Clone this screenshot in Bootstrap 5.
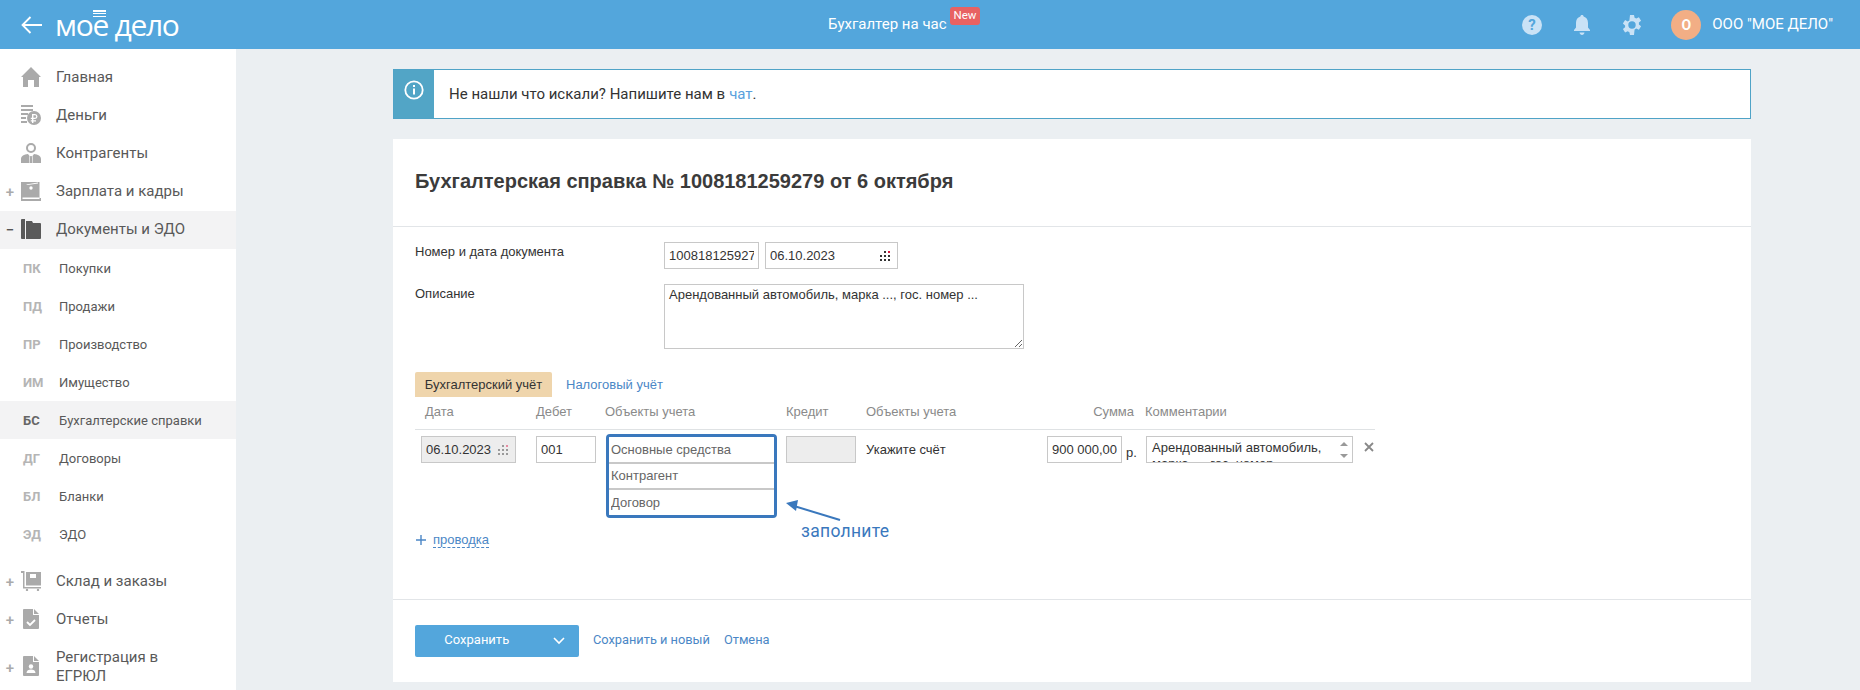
<!DOCTYPE html>
<html lang="ru">
<head>
<meta charset="utf-8">
<title>Бухгалтерская справка</title>
<link href="https://cdn.jsdelivr.net/npm/bootstrap@5.3.0/dist/css/bootstrap.min.css" rel="stylesheet">
<style>
html,body{height:690px;overflow:hidden}
body{background:#ebeff2;font-family:"Liberation Sans",Arial,sans-serif;color:#333;font-size:13px}
.topbar{height:49px;background:#53a6dc;color:#fff;padding:0}
.topbar-in{width:100%;height:49px;display:flex;align-items:center;position:relative;font-family:Roboto,sans-serif}
.back-arrow{margin-left:21px;width:21px;height:18px}
.logo-text{margin-left:13px;font-family:"Open Sans",sans-serif;font-weight:500;font-size:30px;line-height:49px;letter-spacing:-1.3px;color:#fff}
.logo-e{position:relative;display:inline-block}
.logo-e::before{content:"";position:absolute;left:1px;right:2px;top:10px;height:7px;background:repeating-linear-gradient(#fff 0 1.5px,transparent 1.5px 3px)}
.center-title{position:absolute;left:828px;top:0;line-height:49px;font-size:15px;color:#fff}
.new-tag{position:absolute;left:950px;top:7px;width:30px;height:18px;background:#e86262;border-radius:3px;color:#fff;font-size:11.5px;line-height:17px;text-align:center}
.top-right{margin-left:auto;display:flex;align-items:center;padding-right:27px}
.top-ico{width:22px;height:22px;margin-right:28px;display:block}
.ava{width:30px;height:30px;border-radius:50%;background:#f2ae85;color:#fff;font-weight:700;font-size:14px;line-height:30px;text-align:center;margin-right:11px}
.org-name{font-size:15px;color:#fff}
.shell{display:flex;height:641px}
.side{width:236px;background:#fff;flex:none;padding-top:10px;font-family:Roboto,sans-serif;color:#595959;overflow:hidden}
.side-row{height:38px;display:flex;align-items:center;font-size:15px;position:relative;padding-left:56px;padding-bottom:2px}
.side-row.on{background:#f3f3f4}
.side-row .pm{position:absolute;left:5px;top:50%;transform:translateY(-50%);width:10px;text-align:center;color:#aaa;font-size:15px;font-weight:500;line-height:1}
.side-row.on .pm{color:#555}
.side-ico{position:absolute;left:21px;top:8px;width:20px;height:20px}
.sub-row{height:38px;display:flex;align-items:center;font-size:13px;padding-left:23px;padding-top:2px}
.sub-row b{width:36px;color:#b5b5b5;font-weight:700;font-size:13px}
.sub-row.on{background:#f3f3f4}
.sub-row.on b{color:#666}
.gap-sub{height:10px}
.two-line{line-height:19px;height:40px;margin-top:9px}
.main{flex:1;padding:20px 109px 0 157px;min-width:0}
.banner{height:50px;background:#fff;border:1px solid #4fa3c7;display:flex;align-items:stretch;font-family:Roboto,sans-serif;font-size:15px;color:#333}
.banner-ico{width:40px;background:#52a5c6;display:flex;align-items:flex-start;justify-content:center;padding-top:10px;flex:none}
.banner-txt{padding-left:15px;display:flex;align-items:center;padding-top:1px}
.banner-txt a,.blue-link{color:#4b87c6;text-decoration:none}
.banner-txt a{color:#5aa0dc;margin-left:4px}
.doc{margin-top:20px;background:#fff;height:543px;display:flex;flex-direction:column}
.doc-head{height:88px;border-bottom:1px solid #e2e5e8;padding:0 22px 3px;display:flex;align-items:center}
.doc-head h1{font-size:20px;font-weight:700;color:#3b3b3b;margin:0}
.doc-body{flex:1;padding:15px 22px 0;position:relative}
.frow{display:flex}
.frow-gap{margin-top:15px}
.flabel{width:249px;font-size:13px;color:#333}
.fld.form-control{border-radius:0;border:1px solid #c8c8c8;height:27px;min-height:0;padding:2px 4px;font-family:"Liberation Sans",sans-serif;font-size:13px;color:#333;box-shadow:none;background-color:#fff}
.w-num{width:95px}
.date-wrap{position:relative;width:133px;margin-left:6px}
.date-ico{position:absolute;right:8px;top:9px;width:10px;height:10px}
.descr.form-control{width:360px;height:65px;min-height:0;border-radius:0;border:1px solid #c8c8c8;padding:2px 4px;font-size:13px;line-height:15px;font-family:"Liberation Sans",sans-serif;color:#333;box-shadow:none}
.tabs-line{margin-top:23px;display:flex;align-items:center;height:25px;font-size:13px}
.tab-on{width:137px;height:25px;background:#efd5ac;border-radius:2px 2px 0 0;line-height:25px;text-align:center;color:#333}
.tab-off{margin-left:14px;color:#4b87c6;text-decoration:none}
.ent-head{height:33px;border-bottom:1px solid #dfe2e4;width:960px;display:grid;grid-template-columns:121px 69px 181px 80px 200px 68px 1fr;align-items:center;color:#8a8a8a;font-size:13px;padding-bottom:2px}
.ent-head span{display:block}
.ent-head .first-h{padding-left:10px}
.ent-head .last-h{padding-left:11px}
.ent-row{display:grid;width:960px;grid-template-columns:6px 95px 20px 60px 10px 171px 9px 70px 10px 181px 75px 24px 207px 22px;padding-top:6px;align-items:start}
.ent-row .form-control.gray{background:#ededed}
.obj-box{border:3px solid #3a78bd;border-radius:4px;margin-top:-2px;height:84px;display:flex;flex-direction:column;overflow:hidden}
.obj-box input{flex:1;border:0;border-bottom:2px solid #c8c8c8;padding:0 2px;font-size:13px;font-family:"Liberation Sans",sans-serif;background:#fff;min-width:0;outline:0;width:100%}
.obj-box input:last-child{border-bottom:0}
.obj-box input::placeholder{color:#666;opacity:1}
.acct-note{font-size:13px;padding-top:4px;color:#333}
.rub{font-size:13px;padding:7px 0 0 4px;color:#333}
.cmt-wrap{position:relative}
.cmt.form-control{height:27px;min-height:0;overflow:hidden;resize:none;border-radius:0;border:1px solid #c8c8c8;padding:3px 22px 0 5px;font-size:13px;line-height:16px;color:#333;font-family:"Liberation Sans",sans-serif;box-shadow:none}
.spin{position:absolute;right:5px;top:6px;width:8px;height:16px}
.del-x{width:10px;height:10px;margin:6px 0 0 11px}
.add-line{position:absolute;left:23px;top:305px;display:flex;align-items:center;gap:7px;color:#4b87c6;font-size:13px}
.dash-link{color:#4b87c6;text-decoration:none;border-bottom:1px dashed #4b87c6;line-height:15px}
.hint-arrow{position:absolute;left:391px;top:273px;width:58px;height:22px}
.hint-text{position:absolute;left:408px;top:291px;font-family:Roboto,sans-serif;font-size:17.5px;color:#3a78bd;letter-spacing:.3px}
.doc-foot{height:83px;border-top:1px solid #e2e5e8;padding:25px 22px 0;display:flex;align-items:flex-start;font-family:Roboto,sans-serif;font-size:12.8px}
.save-grp.btn-group{width:164px;height:32px}
.save-grp .btn{background:#53a6dc;border:0;color:#fff;font-size:13px;font-family:Roboto,sans-serif;padding:0 0 2px;border-radius:2px}
.save-grp .btn:first-child{width:124px;border-right:1px solid #4a9ad0}
.save-grp .btn:last-child{width:40px}
.foot-links{display:flex;gap:14px;margin-left:14px;line-height:30px}
</style>
</head>
<body>
<nav class="navbar topbar">
  <div class="topbar-in">
    <svg class="back-arrow" viewBox="0 0 21 18" fill="none" stroke="#fff" stroke-width="1.8"><path d="M21 9H1.500M9.500 1 1.500 9l8 8"/></svg>
    <span class="logo-text">мо<span class="logo-e">е</span> дело</span>
    <span class="center-title">Бухгалтер на час</span>
    <span class="new-tag">New</span>
    <div class="top-right">
      <svg class="top-ico" viewBox="0 0 22 22"><circle cx="11" cy="11" r="10" fill="#c9e2f6"/><text x="11" y="16" text-anchor="middle" font-family="Roboto,sans-serif" font-weight="700" font-size="15" fill="#53a6dc">?</text></svg>
      <svg class="top-ico" viewBox="0 0 22 22" fill="#c9e2f6"><path d="M11 1c1 0 1.600.7 1.600 1.500C15.500 3.300 17 5.700 17 9v4.500l2 2.500v1H3v-1l2-2.500V9c0-3.300 1.500-5.700 4.400-6.500C9.400 1.700 10 1 11 1z"/><path d="M8.500 18.500h5c-.3 1.500-1.200 2.500-2.500 2.500s-2.200-1-2.500-2.500z"/></svg>
      <svg class="top-ico" viewBox="0 0 22 22" fill="#c9e2f6"><path fill-rule="evenodd" d="M9 1h4l.6 2.800 1.700.8 2.600-1.300 2.200 3.400-2.200 1.900v1.900l2.200 1.800-2.200 3.500-2.600-1.300-1.700.9L13 21H9l-.6-2.800-1.700-.9-2.600 1.300-2.200-3.500 2.200-1.800V11.400L1.900 9.500 4.100 6.100l2.600 1.300 1.700-.8zM11 7.300a3.700 3.700 0 1 0 0 7.400 3.700 3.700 0 0 0 0-7.400z"/></svg>
      <span class="ava">О</span>
      <span class="org-name">ООО "МОЕ ДЕЛО"</span>
    </div>
  </div>
</nav>
<div class="shell">
  <aside class="side">
    <div class="side-row"><svg class="side-ico" viewBox="0 0 20 20" fill="#aaa"><path d="M10 0 20 10h-2v10h-5v-7H7v7H2V10H0z"/></svg>Главная</div>
    <div class="side-row"><svg class="side-ico" viewBox="0 0 20 20" fill="#aaa"><path d="M0 0h12v2H0zM0 4h12v2H0zM0 8h7v2H0zM0 12h5v2H0zM0 16h6v2H0z"/><circle cx="13" cy="13" r="7"/><path fill="#fff" d="M11 9h3a2.500 2.500 0 0 1 0 5h-1.600v1.200H15v1.300h-2.600V18H11v-1.500H9.800v-1.300H11V14H9.800v-1.300H11zm1.400 1.300v2.400H14a1.200 1.200 0 0 0 0-2.400z"/></svg>Деньги</div>
    <div class="side-row"><svg class="side-ico" viewBox="0 0 20 20" fill="#aaa"><path fill-rule="evenodd" d="M10 0a5 5 0 1 1 0 10 5 5 0 0 1 0-10zm0 2a3 3 0 1 0 0 6 3 3 0 0 0 0-6z"/><path d="M0 20v-4c0-3 3-4.500 7-5l1.500 2-.5 7zM20 20v-4c0-3-3-4.500-7-5l-1.500 2 .5 7zM9.200 13h1.600l.7 7h-3z"/></svg>Контрагенты</div>
    <div class="side-row"><span class="pm">+</span><svg class="side-ico" viewBox="0 0 20 20" fill="#aaa"><path d="M0 1h20v19H0z"/><path fill="#fff" d="M1.500 16.500h17V18h-17zM5 3.500 17 1.500v1L6.500 4z"/><path fill="#fff" d="M18.500 1h1.500v16h-1.500z"/><circle cx="10" cy="7" r="1.700" fill="#fff"/></svg>Зарплата и кадры</div>
    <div class="side-row on"><span class="pm">−</span><svg class="side-ico" viewBox="0 0 20 20" fill="#5a5a5a"><path d="M0 1c0-.5.500-1 1-1h3v20H1c-.5 0-1-.5-1-1zM5 2h6l1 2h7c.5 0 1 .5 1 1v14c0 .5-.5 1-1 1H5z"/></svg>Документы и ЭДО</div>
    <div class="sub-row"><b>ПК</b>Покупки</div>
    <div class="sub-row"><b>ПД</b>Продажи</div>
    <div class="sub-row"><b>ПР</b>Производство</div>
    <div class="sub-row"><b>ИМ</b>Имущество</div>
    <div class="sub-row on"><b>БС</b>Бухгалтерские справки</div>
    <div class="sub-row"><b>ДГ</b>Договоры</div>
    <div class="sub-row"><b>БЛ</b>Бланки</div>
    <div class="sub-row"><b>ЭД</b>ЭДО</div>
    <div class="gap-sub"></div>
    <div class="side-row"><span class="pm">+</span><svg class="side-ico" viewBox="0 0 20 20" fill="#aaa"><path d="M0 0h3.500v16H20v1.500H2V2H0z"/><path d="M5 1h15v13.500H5z"/><path fill="#fff" d="M9 3h6v4H9z"/><circle cx="6" cy="19" r="1.200"/><circle cx="17" cy="19" r="1.200"/></svg>Склад и заказы</div>
    <div class="side-row"><span class="pm">+</span><svg class="side-ico" viewBox="0 0 20 20" fill="#aaa"><path d="M2 1c0-.5.500-1 1-1h9v6h6v13c0 .5-.5 1-1 1H3c-.5 0-1-.5-1-1zM13 0l5 5h-5z"/><path d="m6 13 3 3 5-5" fill="none" stroke="#fff" stroke-width="1.800"/></svg>Отчеты</div>
    <div class="side-row two-line"><span class="pm">+</span><svg class="side-ico" viewBox="0 0 20 20" fill="#aaa"><path d="M2 1c0-.5.500-1 1-1h9v6h6v13c0 .5-.5 1-1 1H3c-.5 0-1-.5-1-1zM13 0l5 5h-5z"/><circle cx="10" cy="10.500" r="2.200" fill="#fff"/><path d="M5.500 17c0-2.500 2-3.500 4.500-3.500s4.500 1 4.500 3.500z" fill="#fff"/></svg><span>Регистрация в<br>ЕГРЮЛ</span></div>
  </aside>
  <main class="main">
    <div class="banner">
      <div class="banner-ico"><svg width="20" height="20" viewBox="0 0 20 20" fill="none" stroke="#fff" stroke-width="1.800"><circle cx="10" cy="10" r="8.700"/><path d="M10 8.500v6" stroke-width="2"/><path d="M10 5v2" stroke-width="2"/></svg></div>
      <div class="banner-txt">Не нашли что искали? Напишите нам в <a href="#">чат</a>.</div>
    </div>
    <section class="doc">
      <div class="doc-head"><h1>Бухгалтерская справка № 1008181259279 от 6 октября</h1></div>
      <div class="doc-body">
        <div class="frow">
          <div class="flabel">Номер и дата документа</div>
          <input class="form-control fld w-num" value="1008181259279">
          <div class="date-wrap"><input class="form-control fld" value="06.10.2023">
            <svg class="date-ico" viewBox="0 0 10 10" fill="#333"><path d="M0 4h2v2H0zM0 8h2v2H0zM4 0h2v2H4zM4 4h2v2H4zM4 8h2v2H4zM8 4h2v2H8zM8 8h2v2H8z"/><path d="M8 0h2v2H8z" fill="#d8133a"/></svg>
          </div>
        </div>
        <div class="frow frow-gap">
          <div class="flabel">Описание</div>
          <textarea class="form-control descr">Арендованный автомобиль, марка ..., гос. номер ...</textarea>
        </div>
        <div class="tabs-line"><span class="tab-on">Бухгалтерский учёт</span><a class="tab-off" href="#">Налоговый учёт</a></div>
        <div class="ent-head">
          <span class="first-h">Дата</span><span>Дебет</span><span>Объекты учета</span><span>Кредит</span><span>Объекты учета</span><span class="text-end">Сумма</span><span class="last-h">Комментарии</span>
        </div>
        <div class="ent-row">
          <i></i>
          <div class="position-relative"><input class="form-control fld gray" value="06.10.2023"><svg class="date-ico" viewBox="0 0 10 10" fill="#999"><path d="M0 4h2v2H0zM0 8h2v2H0zM4 0h2v2H4zM4 4h2v2H4zM4 8h2v2H4zM8 4h2v2H8zM8 8h2v2H8z"/><path d="M8 0h2v2H8z" fill="#e58aa0"/></svg></div>
          <i></i>
          <input class="form-control fld" value="001">
          <i></i>
          <div class="obj-box"><input placeholder="Основные средства"><input placeholder="Контрагент"><input placeholder="Договор"></div>
          <i></i>
          <input class="form-control fld gray" value="">
          <i></i>
          <div class="acct-note">Укажите счёт</div>
          <input class="form-control fld" value="900 000,00">
          <div class="rub">р.</div>
          <div class="cmt-wrap"><textarea class="form-control cmt">Арендованный автомобиль, марка ..., гос. номер ...</textarea>
            <svg class="spin" viewBox="0 0 8 16" fill="#999"><path d="M4 0 8 4H0zM4 16 0 12h8z"/></svg></div>
          <svg class="del-x" viewBox="0 0 10 10" stroke="#888" stroke-width="1.800"><path d="m1 1 8 8M9 1 1 9"/></svg>
        </div>
        <svg class="hint-arrow" viewBox="0 0 58 22"><path d="M56 20 10 6" stroke="#3a78bd" stroke-width="2" fill="none"/><path d="M2 3 14 0l-2 11z" fill="#3a78bd"/></svg>
        <div class="hint-text">заполните</div>
        <div class="add-line"><svg width="10" height="10" viewBox="0 0 10 10" stroke="#4b87c6" stroke-width="1.400"><path d="M0 5h10M5 0v10"/></svg><a class="dash-link" href="#">проводка</a></div>
      </div>
      <div class="doc-foot">
        <div class="btn-group save-grp"><button class="btn" type="button">Сохранить</button><button class="btn" type="button"><svg width="12" height="8" viewBox="0 0 12 8" fill="none" stroke="#fff" stroke-width="1.600"><path d="m1 1 5 5 5-5"/></svg></button></div>
        <div class="foot-links"><a class="blue-link" href="#">Сохранить и новый</a><a class="blue-link" href="#">Отмена</a></div>
      </div>
    </section>
  </main>
</div>
<script src="https://cdn.jsdelivr.net/npm/bootstrap@5.3.0/dist/js/bootstrap.bundle.min.js"></script>
</body>
</html>
